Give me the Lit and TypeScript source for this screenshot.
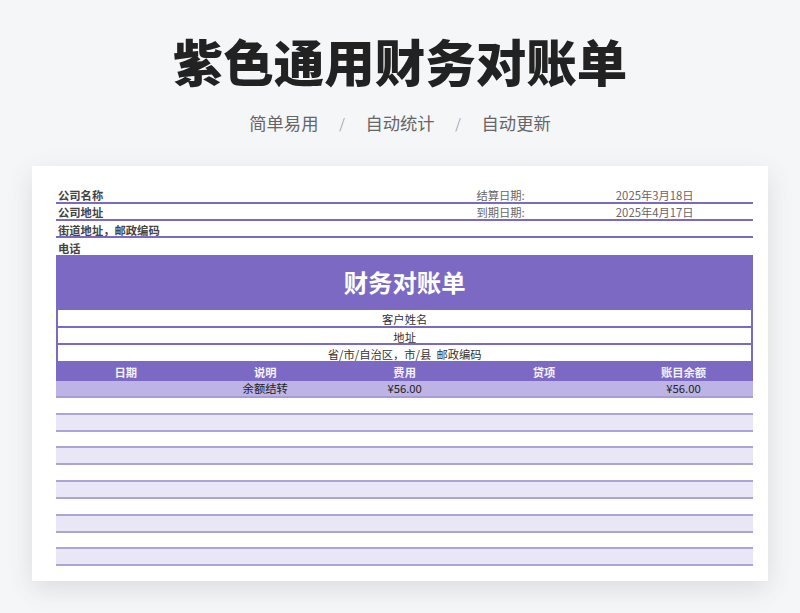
import { LitElement, html, css } from "lit";
import { customElement } from "lit/decorators.js";

@customElement("app-root")
export class AppRoot extends LitElement {
  static styles = css`
    :host {
      display: block;
      width: 800px;
      height: 613px;
      overflow: hidden;
      background: #f5f6f8;
      font-family: "Noto Sans CJK SC", "Noto Sans", sans-serif;
    }
    .top {
      height: 166px;
      display: flex;
      flex-direction: column;
      align-items: center;
    }
    h1 {
      margin: 21px 0 0;
      font-size: 50.5px;
      line-height: 78px;
      font-weight: 900;
      color: #222222;
      white-space: nowrap;
    }
    .sub {
      margin-top: 11px;
      display: flex;
      gap: 15.5px;
      font-size: 17.3px;
      line-height: 26px;
      color: #666666;
    }
    .sub span:nth-child(even) { color: #888888; font-size: 14px; font-weight: 300; width: 10px; margin: 0 3px; text-align: center; }
    .card {
      margin: 0 32px;
      height: 415px;
      box-sizing: border-box;
      padding: 21px 14.7px 0 24px;
      background: #ffffff;
      box-shadow: 0 8px 24px rgba(60, 70, 80, 0.14);
    }
    .row {
      display: grid;
      grid-template-columns: repeat(5, 1fr);
      height: 17px;
      box-sizing: border-box;
      font-size: 11.3px;
      line-height: 16px;
      white-space: nowrap;
    }
    .meta { border-bottom: 2px solid #7c69c4; color: #555555; height: 17.1px; line-height: 15.5px; }
    .meta.plain { border-bottom: none; }
    .meta b { font-weight: 700; color: #444444; padding-left: 2px; grid-column: 1 / 4; }
    .meta .v { padding-left: 2px; color: #666666; }
    .p1 { padding-top: 0.5px; }
    .p2 { padding-top: 0.5px; }
    .p3 { padding-top: 1.5px; }
    .p4 { padding-top: 2.5px; }
    .band {
      height: 55px;
      background: #7c69c4;
      color: #ffffff;
      font-size: 24.4px;
      font-weight: 700;
      display: flex;
      align-items: center;
      justify-content: center;
      padding-bottom: 2px;
      box-sizing: border-box;
    }
    .cust {
      height: 17.5px;
      box-sizing: border-box;
      border: 2px solid #7c69c4;
      border-top: none;
      padding-top: 2px;
      text-align: center;
      font-size: 11.3px;
      line-height: 15px;
      color: #333333;
      background: #ffffff;
    }
    .head { background: #7c69c4; color: #f4f2fb; font-weight: 700; height: 18px; line-height: 19px; text-align: center; }
    .first { background: #bdb4e5; color: #222222; text-align: center; border-bottom: 2px solid #a79cd6; height: 17px; line-height: 15px; }
    .blank { height: 16.85px; box-sizing: border-box; border-bottom: 2px solid #aca3d6; background: #ffffff; }
    .blank.alt { background: #e9e6f6; }
  `;

  render() {
    const blanks = [false, true, false, true, false, true, false, true, false, true];
    return html`
      <div class="top">
        <h1>紫色通用财务对账单</h1>
        <div class="sub">
          <span>简单易用</span><span>/</span><span>自动统计</span><span>/</span><span>自动更新</span>
        </div>
      </div>
      <div class="card">
        <div class="row meta p1"><b>公司名称</b><span class="v">结算日期:</span><span class="v">2025年3月18日</span></div>
        <div class="row meta p2"><b>公司地址</b><span class="v">到期日期:</span><span class="v">2025年4月17日</span></div>
        <div class="row meta p3"><b>街道地址，邮政编码</b></div>
        <div class="row meta plain p4"><b>电话</b></div>
        <div class="band">财务对账单</div>
        <div class="cust">客户姓名</div>
        <div class="cust">地址</div>
        <div class="cust">省/市/自治区，市/县&nbsp;&nbsp;邮政编码</div>
        <div class="row head"><span>日期</span><span>说明</span><span>费用</span><span>贷项</span><span>账目余额</span></div>
        <div class="row first"><span></span><span>余额结转</span><span>¥56.00</span><span></span><span>¥56.00</span></div>
        ${blanks.map((alt) => html`<div class="blank ${alt ? "alt" : ""}"></div>`)}
      </div>
    `;
  }
}
